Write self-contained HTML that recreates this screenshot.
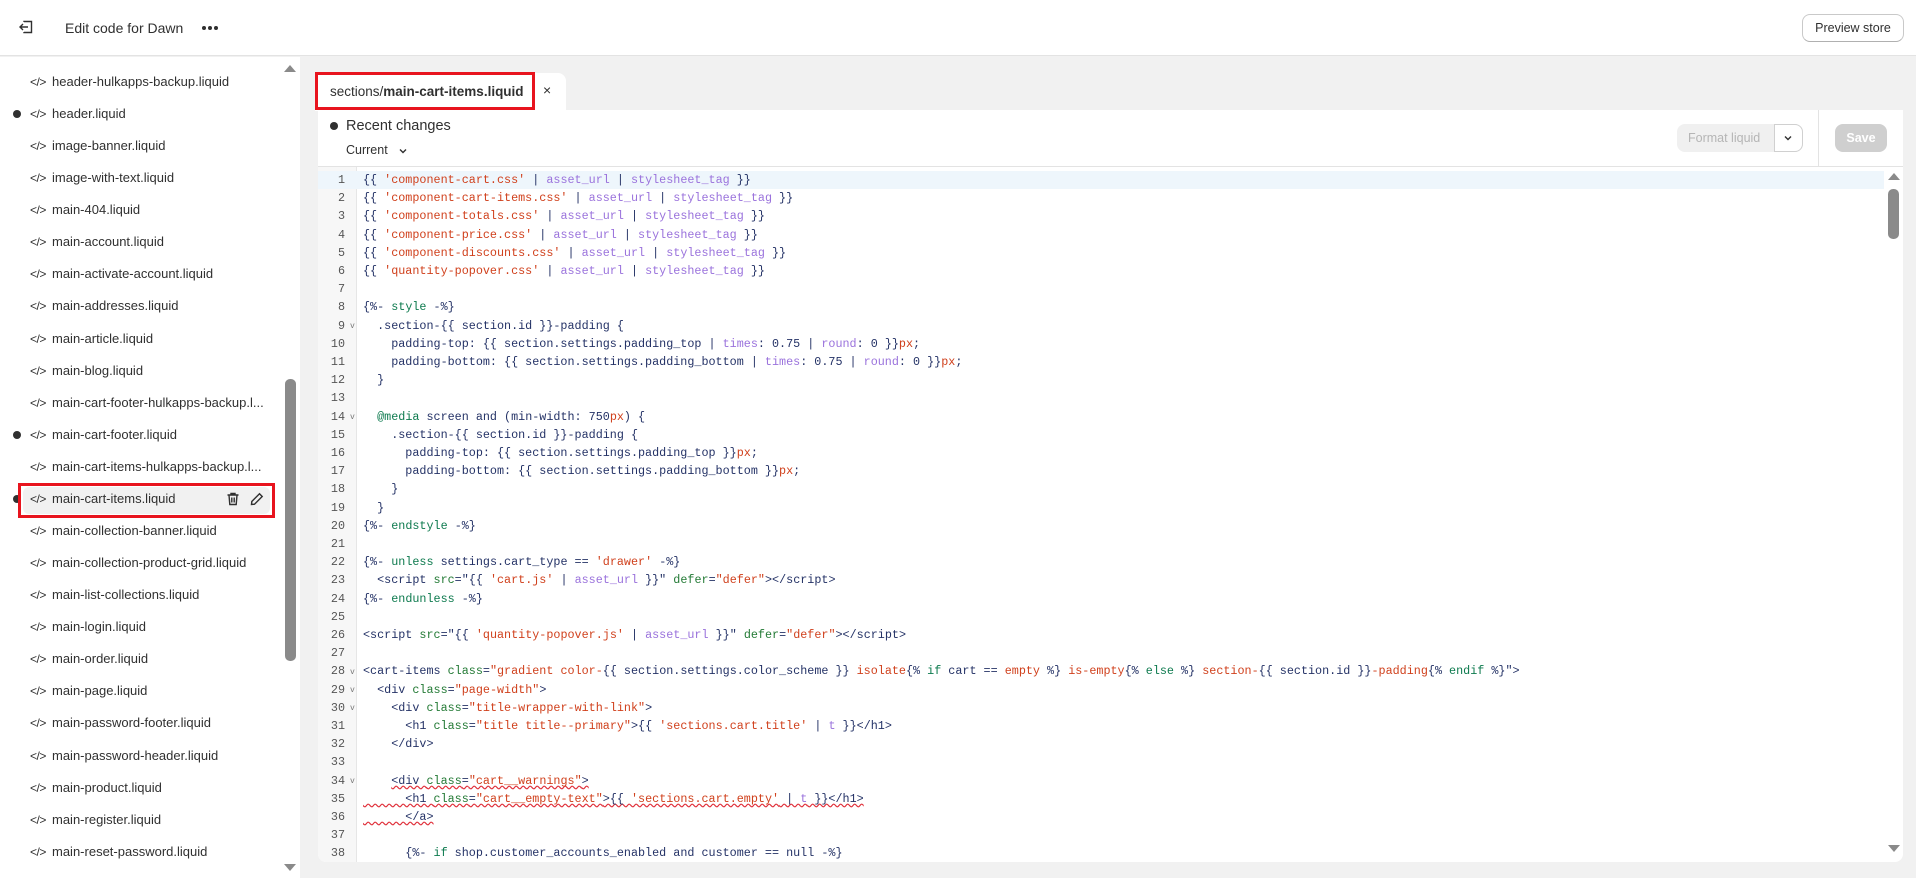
<!DOCTYPE html>
<html><head><meta charset="utf-8"><style>
*{box-sizing:border-box;margin:0;padding:0}
body{width:1916px;height:878px;overflow:hidden;background:#f1f1f1;font-family:"Liberation Sans",sans-serif;color:#303030;position:relative}
.abs{position:absolute}
#hdr{left:0;top:0;width:1916px;height:56px;background:#fff;border-bottom:1px solid #e3e3e3}
#side{left:0;top:57px;width:300px;height:821px;background:#fff;overflow:hidden}
.it{position:absolute;left:0;width:300px;height:32px;font-size:13px;line-height:32px}
.it .ic{position:absolute;left:30px;top:0;font-size:12px;letter-spacing:-0.5px;color:#303030}
.it .tx{position:absolute;left:52px;top:0;white-space:nowrap}
.it .dot{position:absolute;left:13px;top:12px;width:8px;height:8px;border-radius:50%;background:#303030}
.code{font-family:"Liberation Mono",monospace;font-size:11.75px;color:#243266}
.ln{position:absolute;left:318px;width:39px;height:18.2px;line-height:18.2px;text-align:right;padding-right:12px;font-family:"Liberation Mono",monospace;font-size:11.75px;color:#555}
.cl{position:absolute;left:363px;height:18.2px;line-height:18.2px;white-space:pre}
.s{color:#d0401c}.f{color:#9a72dc}.k{color:#0d7a4e}.a{color:#237a35}
.fold{position:absolute;left:350px;font-size:8px;color:#777}
.w{text-decoration:underline wavy #e0303a;text-decoration-skip-ink:none}
.hd{position:absolute;top:26px;width:4px;height:4px;border-radius:50%;background:#303030}
</style></head><body>
<div id="hdr" class="abs">
<svg class="abs" style="left:18px;top:19px" width="16" height="16" viewBox="0 0 16 16" fill="none" stroke="#303030" stroke-width="1.4"><path d="M6 3V2.5h7.5v11H6V13"/><path d="M10 8H2M5 5L2 8l3 3"/></svg>
<div class="abs" style="left:65px;top:20px;font-size:14px">Edit code for Dawn</div>
<div class="hd" style="left:202px"></div><div class="hd" style="left:208px"></div><div class="hd" style="left:214px"></div>
<div class="abs" style="left:1802px;top:14px;width:102px;height:28px;border:1px solid #c9c9c9;border-bottom-color:#b0b0b0;border-radius:8px;font-size:12.5px;line-height:26px;text-align:center;color:#303030">Preview store</div>
</div>
<div id="side" class="abs">
<div class="it" style="top:-23px"><span class="ic">&lt;/&gt;</span><span class="tx">header-group.json</span></div>
<div class="it" style="top:9px"><span class="ic">&lt;/&gt;</span><span class="tx">header-hulkapps-backup.liquid</span></div>
<div class="it" style="top:41px"><span class="dot"></span><span class="ic">&lt;/&gt;</span><span class="tx">header.liquid</span></div>
<div class="it" style="top:73px"><span class="ic">&lt;/&gt;</span><span class="tx">image-banner.liquid</span></div>
<div class="it" style="top:105px"><span class="ic">&lt;/&gt;</span><span class="tx">image-with-text.liquid</span></div>
<div class="it" style="top:137px"><span class="ic">&lt;/&gt;</span><span class="tx">main-404.liquid</span></div>
<div class="it" style="top:169px"><span class="ic">&lt;/&gt;</span><span class="tx">main-account.liquid</span></div>
<div class="it" style="top:201px"><span class="ic">&lt;/&gt;</span><span class="tx">main-activate-account.liquid</span></div>
<div class="it" style="top:233px"><span class="ic">&lt;/&gt;</span><span class="tx">main-addresses.liquid</span></div>
<div class="it" style="top:266px"><span class="ic">&lt;/&gt;</span><span class="tx">main-article.liquid</span></div>
<div class="it" style="top:298px"><span class="ic">&lt;/&gt;</span><span class="tx">main-blog.liquid</span></div>
<div class="it" style="top:330px"><span class="ic">&lt;/&gt;</span><span class="tx">main-cart-footer-hulkapps-backup.l...</span></div>
<div class="it" style="top:362px"><span class="dot"></span><span class="ic">&lt;/&gt;</span><span class="tx">main-cart-footer.liquid</span></div>
<div class="it" style="top:394px"><span class="ic">&lt;/&gt;</span><span class="tx">main-cart-items-hulkapps-backup.l...</span></div>
<div class="abs" style="left:23px;top:430px;width:247px;height:27px;background:#f1f1f1;border-radius:6px"></div>
<div class="it" style="top:426px"><span class="dot"></span><span class="ic">&lt;/&gt;</span><span class="tx">main-cart-items.liquid</span>
<svg class="abs" style="left:226px;top:9px" width="14" height="14" viewBox="0 0 14 14" fill="none" stroke="#303030" stroke-width="1.4"><path d="M1.5 3h11M5 3V1.5h4V3M3 3l.8 9.5h6.4L11 3M5.8 5.5v5M8.2 5.5v5"/></svg>
<svg class="abs" style="left:250px;top:9px" width="14" height="14" viewBox="0 0 14 14" fill="none" stroke="#303030" stroke-width="1.4"><path d="M9.5 1.8l2.7 2.7L4.5 12.2 1.5 12.5l.3-3z"/></svg></div>
<div class="abs" style="left:18px;top:426px;width:257px;height:35px;border:3px solid #e8141e"></div>
<div class="it" style="top:458px"><span class="ic">&lt;/&gt;</span><span class="tx">main-collection-banner.liquid</span></div>
<div class="it" style="top:490px"><span class="ic">&lt;/&gt;</span><span class="tx">main-collection-product-grid.liquid</span></div>
<div class="it" style="top:522px"><span class="ic">&lt;/&gt;</span><span class="tx">main-list-collections.liquid</span></div>
<div class="it" style="top:554px"><span class="ic">&lt;/&gt;</span><span class="tx">main-login.liquid</span></div>
<div class="it" style="top:586px"><span class="ic">&lt;/&gt;</span><span class="tx">main-order.liquid</span></div>
<div class="it" style="top:618px"><span class="ic">&lt;/&gt;</span><span class="tx">main-page.liquid</span></div>
<div class="it" style="top:650px"><span class="ic">&lt;/&gt;</span><span class="tx">main-password-footer.liquid</span></div>
<div class="it" style="top:683px"><span class="ic">&lt;/&gt;</span><span class="tx">main-password-header.liquid</span></div>
<div class="it" style="top:715px"><span class="ic">&lt;/&gt;</span><span class="tx">main-product.liquid</span></div>
<div class="it" style="top:747px"><span class="ic">&lt;/&gt;</span><span class="tx">main-register.liquid</span></div>
<div class="it" style="top:779px"><span class="ic">&lt;/&gt;</span><span class="tx">main-reset-password.liquid</span></div>
<div class="abs" style="left:284px;top:8px;width:0;height:0;border-left:6px solid transparent;border-right:6px solid transparent;border-bottom:7px solid #8a8a8a"></div>
<div class="abs" style="left:285px;top:322px;width:11px;height:282px;background:#8a8a8a;border-radius:5px"></div>
<div class="abs" style="left:284px;top:807px;width:0;height:0;border-left:6px solid transparent;border-right:6px solid transparent;border-top:7px solid #8a8a8a"></div>
</div>
<!-- tab -->
<div class="abs" style="left:315px;top:73px;width:251px;height:38px;background:#fff;border-radius:8px 8px 0 0"></div>
<div class="abs" style="left:330px;top:84px;font-size:13.5px;color:#303030">sections/<b>main-cart-items.liquid</b></div>
<div class="abs" style="left:543px;top:82px;font-size:14px;color:#303030">×</div>
<div class="abs" style="left:315px;top:72px;width:220px;height:38px;border:3px solid #e8141e"></div>
<!-- editor -->
<div class="abs" style="left:318px;top:110px;width:1585px;height:752px;background:#fff;border-radius:0 0 8px 8px;overflow:hidden">
<div class="abs" style="left:12px;top:12px;width:8px;height:8px;border-radius:50%;background:#303030"></div>
<div class="abs" style="left:28px;top:8px;font-size:14.5px;color:#303030;font-weight:500">Recent changes</div>
<div class="abs" style="left:28px;top:33px;font-size:12.5px;color:#303030">Current</div>
<svg class="abs" style="left:80px;top:36px" width="10" height="10" viewBox="0 0 10 10" fill="none" stroke="#303030" stroke-width="1.4"><path d="M2 3.5l3 3 3-3"/></svg>
<div class="abs" style="left:1359px;top:14px;width:126px;height:28px;background:#f0f0f0;border-radius:8px"></div>
<div class="abs" style="left:1370px;top:21px;font-size:12.5px;color:#b5b5b5">Format liquid</div>
<div class="abs" style="left:1456px;top:14px;width:29px;height:28px;border:1px solid #d0d0d0;border-radius:0 8px 8px 0;background:#fff"></div>
<svg class="abs" style="left:1465px;top:23px" width="10" height="10" viewBox="0 0 10 10" fill="none" stroke="#303030" stroke-width="1.4"><path d="M2 3.5l3 3 3-3"/></svg>
<div class="abs" style="left:1500px;top:0;width:1px;height:56px;background:#e3e3e3"></div>
<div class="abs" style="left:1517px;top:14px;width:52px;height:28px;background:#cfcfcf;border-radius:8px;color:#fff;font-size:12.5px;font-weight:bold;text-align:center;line-height:28px">Save</div>
<div class="abs" style="left:0;top:56px;width:1585px;height:1px;background:#e3e3e3"></div>
<div class="abs" style="left:0;top:57px;width:39px;height:700px;background:#f7f7f7;border-right:1px solid #e6e6e6"></div>
<div class="abs" style="left:0;top:61px;width:1566px;height:18px;background:#eef6fc"></div>
<div class="abs" style="left:1570px;top:63px;width:0;height:0;border-left:6px solid transparent;border-right:6px solid transparent;border-bottom:7px solid #8a8a8a"></div>
<div class="abs" style="left:1570px;top:79px;width:11px;height:50px;background:#8a8a8a;border-radius:5px"></div>
<div class="abs" style="left:1570px;top:735px;width:0;height:0;border-left:6px solid transparent;border-right:6px solid transparent;border-top:7px solid #8a8a8a"></div>
</div>
<div class="code">
<div class="ln" style="top:171px">1</div><div class="cl" style="top:171px">{{ <span class="s">'component-cart.css'</span> | <span class="f">asset_url</span> | <span class="f">stylesheet_tag</span> }}</div>
<div class="ln" style="top:189.2px">2</div><div class="cl" style="top:189.2px">{{ <span class="s">'component-cart-items.css'</span> | <span class="f">asset_url</span> | <span class="f">stylesheet_tag</span> }}</div>
<div class="ln" style="top:207.4px">3</div><div class="cl" style="top:207.4px">{{ <span class="s">'component-totals.css'</span> | <span class="f">asset_url</span> | <span class="f">stylesheet_tag</span> }}</div>
<div class="ln" style="top:225.6px">4</div><div class="cl" style="top:225.6px">{{ <span class="s">'component-price.css'</span> | <span class="f">asset_url</span> | <span class="f">stylesheet_tag</span> }}</div>
<div class="ln" style="top:243.8px">5</div><div class="cl" style="top:243.8px">{{ <span class="s">'component-discounts.css'</span> | <span class="f">asset_url</span> | <span class="f">stylesheet_tag</span> }}</div>
<div class="ln" style="top:262px">6</div><div class="cl" style="top:262px">{{ <span class="s">'quantity-popover.css'</span> | <span class="f">asset_url</span> | <span class="f">stylesheet_tag</span> }}</div>
<div class="ln" style="top:280.2px">7</div>
<div class="ln" style="top:298.4px">8</div><div class="cl" style="top:298.4px">{%- <span class="k">style</span> -%}</div>
<div class="ln" style="top:316.6px">9</div><div class="fold" style="top:322px">v</div><div class="cl" style="top:316.6px">  .section-{{ section.id }}-padding {</div>
<div class="ln" style="top:334.8px">10</div><div class="cl" style="top:334.8px">    padding-top: {{ section.settings.padding_top | <span class="f">times</span>: 0.75 | <span class="f">round</span>: 0 }}<span class="s">px</span>;</div>
<div class="ln" style="top:353px">11</div><div class="cl" style="top:353px">    padding-bottom: {{ section.settings.padding_bottom | <span class="f">times</span>: 0.75 | <span class="f">round</span>: 0 }}<span class="s">px</span>;</div>
<div class="ln" style="top:371.2px">12</div><div class="cl" style="top:371.2px">  }</div>
<div class="ln" style="top:389.4px">13</div>
<div class="ln" style="top:407.6px">14</div><div class="fold" style="top:413px">v</div><div class="cl" style="top:407.6px">  <span class="k">@media</span> screen and (min-width: 750<span class="s">px</span>) {</div>
<div class="ln" style="top:425.8px">15</div><div class="cl" style="top:425.8px">    .section-{{ section.id }}-padding {</div>
<div class="ln" style="top:444px">16</div><div class="cl" style="top:444px">      padding-top: {{ section.settings.padding_top }}<span class="s">px</span>;</div>
<div class="ln" style="top:462.2px">17</div><div class="cl" style="top:462.2px">      padding-bottom: {{ section.settings.padding_bottom }}<span class="s">px</span>;</div>
<div class="ln" style="top:480.4px">18</div><div class="cl" style="top:480.4px">    }</div>
<div class="ln" style="top:498.6px">19</div><div class="cl" style="top:498.6px">  }</div>
<div class="ln" style="top:516.8px">20</div><div class="cl" style="top:516.8px">{%- <span class="k">endstyle</span> -%}</div>
<div class="ln" style="top:535px">21</div>
<div class="ln" style="top:553.2px">22</div><div class="cl" style="top:553.2px">{%- <span class="k">unless</span> settings.cart_type == <span class="s">'drawer'</span> -%}</div>
<div class="ln" style="top:571.4px">23</div><div class="cl" style="top:571.4px">  &lt;script <span class="a">src</span>="{{ <span class="s">'cart.js'</span> | <span class="f">asset_url</span> }}" <span class="a">defer</span>=<span class="s">"defer"</span>&gt;&lt;/script&gt;</div>
<div class="ln" style="top:589.6px">24</div><div class="cl" style="top:589.6px">{%- <span class="k">endunless</span> -%}</div>
<div class="ln" style="top:607.8px">25</div>
<div class="ln" style="top:626px">26</div><div class="cl" style="top:626px">&lt;script <span class="a">src</span>="{{ <span class="s">'quantity-popover.js'</span> | <span class="f">asset_url</span> }}" <span class="a">defer</span>=<span class="s">"defer"</span>&gt;&lt;/script&gt;</div>
<div class="ln" style="top:644.2px">27</div>
<div class="ln" style="top:662.4px">28</div><div class="fold" style="top:668px">v</div><div class="cl" style="top:662.4px">&lt;cart-items <span class="a">class</span>=<span class="s">"gradient color-</span>{{ section.settings.color_scheme }} <span class="s">isolate</span>{% <span class="k">if</span> cart == <span class="s">empty</span> %} <span class="s">is-empty</span>{% <span class="k">else</span> %} <span class="s">section-</span>{{ section.id }}<span class="s">-padding</span>{% <span class="k">endif</span> %}"&gt;</div>
<div class="ln" style="top:680.6px">29</div><div class="fold" style="top:686px">v</div><div class="cl" style="top:680.6px">  &lt;div <span class="a">class</span>=<span class="s">"page-width"</span>&gt;</div>
<div class="ln" style="top:698.8px">30</div><div class="fold" style="top:704px">v</div><div class="cl" style="top:698.8px">    &lt;div <span class="a">class</span>=<span class="s">"title-wrapper-with-link"</span>&gt;</div>
<div class="ln" style="top:717px">31</div><div class="cl" style="top:717px">      &lt;h1 <span class="a">class</span>=<span class="s">"title title--primary"</span>&gt;{{ <span class="s">'sections.cart.title'</span> | <span class="f">t</span> }}&lt;/h1&gt;</div>
<div class="ln" style="top:735.2px">32</div><div class="cl" style="top:735.2px">    &lt;/div&gt;</div>
<div class="ln" style="top:753.4px">33</div>
<div class="ln" style="top:771.6px">34</div><div class="fold" style="top:777px">v</div><div class="cl" style="top:771.6px">    <span class="w">&lt;div <span class="a">class</span>=<span class="s">"cart__warnings"</span>&gt;</span></div>
<div class="ln" style="top:789.8px">35</div><div class="cl w" style="top:789.8px">      &lt;h1 <span class="a">class</span>=<span class="s">"cart__empty-text"</span>&gt;{{ <span class="s">'sections.cart.empty'</span> | <span class="f">t</span> }}&lt;/h1&gt;</div>
<div class="ln" style="top:808px">36</div><div class="cl w" style="top:808px">      &lt;/a&gt;</div>
<div class="ln" style="top:826.2px">37</div>
<div class="ln" style="top:844.4px">38</div><div class="cl" style="top:844.4px">      {%- <span class="k">if</span> shop.customer_accounts_enabled and customer == null -%}</div>
</div>
</body></html>
